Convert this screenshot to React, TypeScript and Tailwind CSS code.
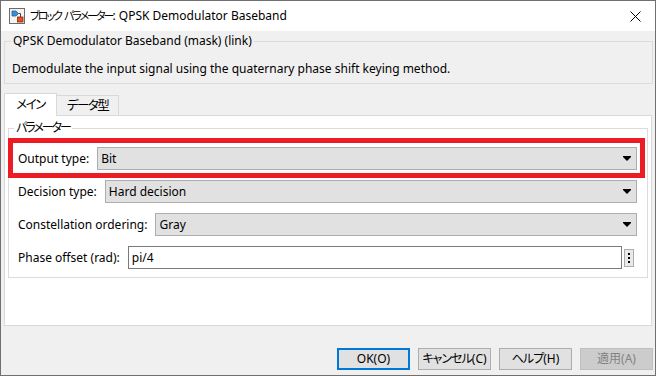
import React from "react"

const font = { fontFamily: '"Noto Sans", "Noto Sans CJK JP", sans-serif' }

function BlockIcon() {
  return (
    <svg width="16" height="16" viewBox="0 0 16 16" className="shrink-0">
      <rect x="0.5" y="0.5" width="15" height="15" fill="#f3f3f3" stroke="#6b6b6b" />
      <path d="M3 3h4l2.5 2.5L7 8H3z" fill="#3a8fd8" stroke="#1e5f9e" strokeWidth="0.8" />
      <path d="M9.5 5.5H11.5V9" fill="none" stroke="#444" strokeWidth="1" />
      <rect x="8.5" y="9" width="5.5" height="5" fill="#e2531f" stroke="#8a2a0a" strokeWidth="0.8" />
    </svg>
  )
}

function Arrow() {
  return (
    <svg width="8" height="5" viewBox="0 0 8 5" className="shrink-0">
      <path d="M0 0h8v1L4 5 0 1z" fill="#000" />
    </svg>
  )
}

function SelectRow({ label, value }: { label: string; value: string }) {
  return (
    <div className="flex items-center h-[23px]">
      <span className="whitespace-nowrap mr-[8px]">{label}</span>
      <div className="flex-1 h-[23px] flex items-center bg-[#e1e1e1] border border-[#adadad] pl-[3px] pr-[5px]">
        <span className="flex-1">{value}</span>
        <Arrow />
      </div>
    </div>
  )
}

export default function App() {
  return (
    <div className="w-[657px] h-[376px] bg-white text-[12px] text-black leading-[16px] [font-feature-settings:'palt']" style={font}>
      <div className="w-[656px] h-[376px] border border-[#707070] flex flex-col bg-[#f0f0f0]">
        {/* title bar */}
        <div className="h-[30px] bg-white flex items-center pl-[8px] pr-[14px] shrink-0">
          <BlockIcon />
          <span className="ml-[5px] flex-1 whitespace-nowrap">
            <span className="text-[11px] tracking-[-2px]">ブロック</span>{" "}
            <span className="text-[11px] tracking-[-2px]">パラメーター</span>: QPSK Demodulator Baseband
          </span>
          <svg width="11" height="11" viewBox="0 0 11 11">
            <path d="M0.5 0.5l10 10M10.5 0.5l-10 10" stroke="#000" strokeWidth="1" />
          </svg>
        </div>

        <div className="flex-1 flex flex-col pl-[3px] pr-[2px] pt-[2px]">
          <fieldset className="h-[51px] border border-[#dcdcdc] px-[7px]">
            <legend className="px-[2px] ml-[-1px]">QPSK Demodulator Baseband (mask) (link)</legend>
            <div className="mt-[12px]">Demodulate the input signal using the quaternary phase shift keying method.</div>
          </fieldset>

          {/* tabs */}
          <div className="flex items-end h-[23px] mt-[8px] pr-[1px] text-[12.5px] tracking-[-1.5px]">
            <div className="h-[23px] w-[53px] bg-white border border-b-0 border-[#d9d9d9] flex items-center justify-center relative z-10 mb-[-1px]">
              メイン
            </div>
            <div className="h-[20px] w-[62px] border border-l-0 border-b-0 border-[#d9d9d9] flex items-center justify-center">
              データ型
            </div>
          </div>
          <div className="h-[211px] mr-[1px] bg-white border border-[#d9d9d9] px-[3px] pt-[4px]">
            <fieldset className="h-[158px] border border-[#dcdcdc] pl-[9px] pr-[10px] pt-[11px]">
              <legend className="px-[2px] ml-[-4px] tracking-[-2px]">パラメーター</legend>
              <div className="flex flex-col gap-[10px]">
                <div className="relative">
                  <div className="absolute left-[-10px] right-[-8px] top-[-9px] bottom-[-8px] border-[5px] border-[#ed1c24] pointer-events-none" />
                  <SelectRow label="Output type:" value="Bit" />
                </div>
                <SelectRow label="Decision type:" value="Hard decision" />
                <SelectRow label="Constellation ordering:" value="Gray" />
                <div className="flex items-center h-[23px]">
                  <span className="whitespace-nowrap mr-[8px]">Phase offset (rad):</span>
                  <div className="flex-1 h-[23px] flex items-center bg-white border border-[#7a7a7a] pl-[3px]">pi/4</div>
                  <div className="ml-[2px] mr-[3px] w-[10px] h-[18px] bg-[#e9e9e9] border border-[#adadad] flex flex-col items-center justify-center gap-[2px]">
                    <span className="w-[2px] h-[2px] bg-black" />
                    <span className="w-[2px] h-[2px] bg-black" />
                    <span className="w-[2px] h-[2px] bg-black" />
                  </div>
                </div>
              </div>
            </fieldset>
          </div>

          {/* buttons */}
          <div className="flex justify-end gap-[8px] mt-[22px] whitespace-nowrap">
            <button className="w-[73px] h-[22px] bg-[#e1e1e1] border-2 border-[#0078d7] flex items-center justify-center">OK(O)</button>
            <button className="w-[73px] h-[22px] bg-[#e1e1e1] border border-[#adadad] flex items-center justify-center">
              <span className="tracking-[-1px]">キャンセル</span>(C)
            </button>
            <button className="w-[73px] h-[22px] bg-[#e1e1e1] border border-[#adadad] flex items-center justify-center">
              <span className="tracking-[-1px]">ヘルプ</span>(H)
            </button>
            <button className="w-[73px] h-[22px] bg-[#cccccc] border border-[#bfbfbf] text-[#838383] flex items-center justify-center">適用(A)</button>
          </div>
        </div>
      </div>
    </div>
  )
}
